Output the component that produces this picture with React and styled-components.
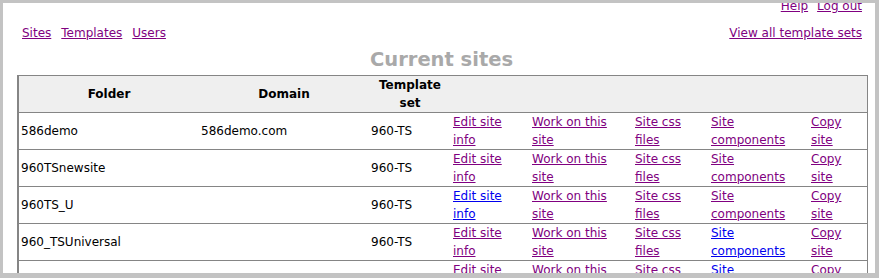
import { createGlobalStyle, styled } from "styled-components";

const Global = createGlobalStyle`
  html, body {
    margin: 0;
    padding: 0;
    background: #fff;
  }
  body {
    font-family: "DejaVu Sans", Verdana, sans-serif;
    font-size: 12px;
  }
`;

const Frame = styled.div`
  box-sizing: border-box;
  width: 879px;
  height: 278px;
  border-style: solid;
  border-color: #c3c3c3;
  border-width: 3px 4px 5px 3px;
  overflow: hidden;
  background: #fff;
`;

const Page = styled.div`
  padding: 0 9px 0 14px;
  margin-top: -6px;
`;

const LinkBar = styled.div`
  display: flex;
  justify-content: ${props => (props.split ? "space-between" : "flex-end")};
  padding: 0 4px 0 5px;
  line-height: 18px;
  margin-bottom: ${props => props.gap || 0}px;
`;

const LinkGroup = styled.div`
  display: flex;
  gap: ${props => props.gap || 8}px;
`;

const Link = styled.a`
  color: ${props => (props.fresh ? "#0000ee" : "#800080")};
  text-decoration: underline;
  cursor: pointer;
`;

const Heading = styled.h1`
  margin: 6px 0 3px;
  font-size: 19.5px;
  line-height: 24px;
  font-weight: bold;
  color: #a9a9a9;
  text-align: center;
`;

const Table = styled.table`
  width: 849px;
  table-layout: fixed;
  border-collapse: collapse;
  border: 1px solid #858585;
  border-left-width: 2px;
`;

const HeadCell = styled.th`
  background: #efefef;
  font-weight: bold;
  color: #000;
  line-height: 18px;
  padding: 0;
  text-align: center;
  vertical-align: middle;
`;

const Cell = styled.td`
  border-top: 1px solid #858585;
  line-height: 18px;
  padding: 0 2px;
  vertical-align: middle;
  color: #000;
`;

const widths = [181, 170, 82, 79, 103, 76, 100, 58];

const sites = [
  { folder: "586demo", domain: "586demo.com", set: "960-TS", fresh: [] },
  { folder: "960TSnewsite", domain: "", set: "960-TS", fresh: [] },
  { folder: "960TS_U", domain: "", set: "960-TS", fresh: [0] },
  { folder: "960_TSUniversal", domain: "", set: "960-TS", fresh: [3] },
  { folder: "allsites_demo", domain: "", set: "960-TS", fresh: [3] },
];

const actions = [
  ["Edit site", "info"],
  ["Work on this", "site"],
  ["Site css", "files"],
  ["Site", "components"],
  ["Copy", "site"],
];

export default function App() {
  return (
    <>
      <Global />
      <Frame>
        <Page>
          <LinkBar gap={9}>
            <LinkGroup gap={9}>
              <Link>Help</Link>
              <Link>Log out</Link>
            </LinkGroup>
          </LinkBar>
          <LinkBar split>
            <LinkGroup gap={10}>
              <Link>Sites</Link>
              <Link>Templates</Link>
              <Link>Users</Link>
            </LinkGroup>
            <Link>View all template sets</Link>
          </LinkBar>
          <Heading>Current sites</Heading>
          <Table>
            <colgroup>
              {widths.map((w, i) => (
                <col key={i} style={{ width: w }} />
              ))}
            </colgroup>
            <thead>
              <tr>
                <HeadCell>Folder</HeadCell>
                <HeadCell>Domain</HeadCell>
                <HeadCell>
                  Template
                  <br />
                  set
                </HeadCell>
                <HeadCell />
                <HeadCell />
                <HeadCell />
                <HeadCell />
                <HeadCell />
              </tr>
            </thead>
            <tbody>
              {sites.map(site => (
                <tr key={site.folder}>
                  <Cell>{site.folder}</Cell>
                  <Cell>{site.domain}</Cell>
                  <Cell>{site.set}</Cell>
                  {actions.map((a, i) => (
                    <Cell key={i}>
                      <Link fresh={site.fresh.includes(i) ? 1 : 0}>
                        {a[0]}
                        <br />
                        {a[1]}
                      </Link>
                    </Cell>
                  ))}
                </tr>
              ))}
            </tbody>
          </Table>
        </Page>
      </Frame>
    </>
  );
}
